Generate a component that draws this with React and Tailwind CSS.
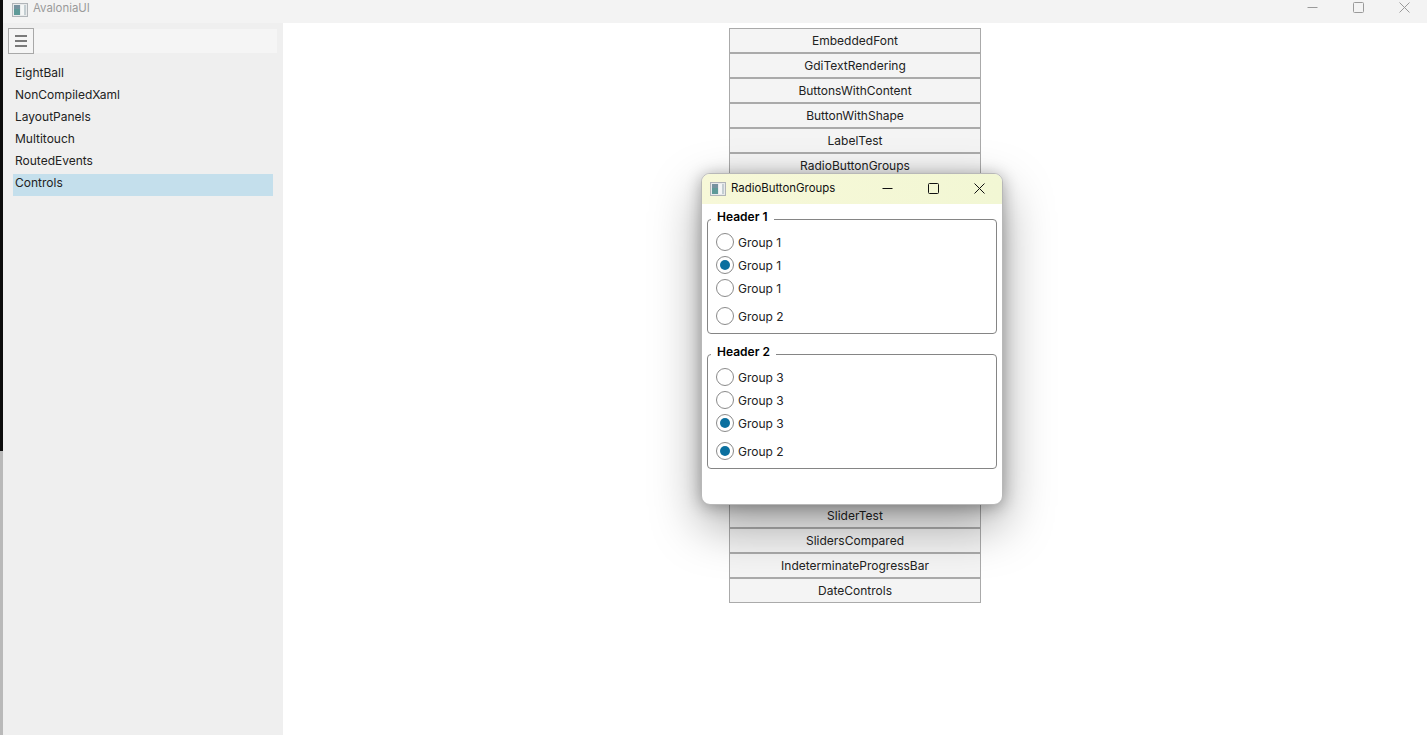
import { useState } from "react";

const topButtons = ["EmbeddedFont", "GdiTextRendering", "ButtonsWithContent", "ButtonWithShape", "LabelTest", "RadioButtonGroups"];
const bottomButtons = ["SliderTest", "SlidersCompared", "IndeterminateProgressBar", "DateControls"];
const sideItems = ["EightBall", "NonCompiledXaml", "LayoutPanels", "Multitouch", "RoutedEvents", "Controls"];

const AppIcon = () => (
  <svg width="16" height="14" viewBox="0 0 16 14" className="shrink-0">
    <rect x="0.5" y="0.5" width="15" height="13" fill="#e8eaeb" stroke="#b0b4b8" />
    <rect x="2" y="2" width="6" height="10" fill="#5e9a98" />
    <rect x="2" y="2" width="6" height="4" fill="#76929f" />
    <rect x="9" y="2" width="5" height="10" fill="#f4f6f6" />
    <rect x="12" y="2" width="2" height="10" fill="#c4ced2" />
  </svg>
);

const WindowControls = ({ color, className }) => (
  <div className={className}>
    <svg width="11" height="11" viewBox="0 0 11 11" className="shrink-0">
      <path d="M0.5 5.5H10.5" stroke={color} strokeWidth="1" />
    </svg>
    <svg width="11" height="11" viewBox="0 0 11 11" className="shrink-0">
      <rect x="0.5" y="0.5" width="10" height="10" rx="1" fill="none" stroke={color} strokeWidth="1" />
    </svg>
    <svg width="11" height="11" viewBox="0 0 11 11" className="shrink-0">
      <path d="M0.5 0.5L10.5 10.5M10.5 0.5L0.5 10.5" stroke={color} strokeWidth="1" />
    </svg>
  </div>
);

const Radio = ({ label, checked, className = "" }) => (
  <div className={`flex items-center h-[23px] ${className}`}>
    <span className="flex items-center justify-center w-[18px] h-[18px] rounded-full border border-[#8a8a8a] bg-white">
      {checked && <span className="w-[10px] h-[10px] rounded-full bg-[#0a6f9f]" />}
    </span>
    <span className="ml-[4px] pt-[2px] text-[12px] text-[#222]">{label}</span>
  </div>
);

const GroupBox = ({ header, children, className = "" }) => (
  <div className={`relative h-[115px] border border-[#858585] rounded-[4px] pt-[10px] pl-[8px] ${className}`}>
    <span className="absolute left-[3px] top-[-12px] bg-white px-[6px] h-[18px] leading-[18px] text-[12px] font-semibold text-black">
      {header}
    </span>
    {children}
  </div>
);

const ListButton = ({ label }) => (
  <div className="flex items-center justify-center w-[252px] h-[25px] pt-[1px] border border-[#aaaaaa] bg-[#f4f4f4] text-[12px] text-[#222]">
    {label}
  </div>
);

export default function App() {
  const [selected] = useState("Controls");

  return (
    <div className="flex w-[1427px] h-[735px] overflow-hidden bg-white font-['Inter',sans-serif]">
      <div className="flex flex-col w-[3px] shrink-0">
        <div className="h-[451px] bg-[#0c0c0c]" />
        <div className="flex-1 bg-[#b9b9b9]" />
      </div>
      <div className="flex flex-col flex-1 min-w-0">
        <div className="flex items-center h-[23px] bg-[#f3f3f3] shrink-0">
          <div className="ml-[9px] pb-[4px]">
            <AppIcon />
          </div>
          <span className="ml-[5px] pb-[5px] text-[11.4px] text-[#9a9a9a]">AvaloniaUI</span>
          <WindowControls
            color="#9a9a9a"
            className="ml-auto mr-[17px] mb-[9px] flex items-center gap-[35px]"
          />
        </div>
        <div className="flex flex-1 min-h-0">
          <aside className="w-[280px] shrink-0 bg-[#efefef] pt-[6px]">
            <div className="flex items-center ml-[5px] w-[269px] h-[24px] bg-[#f5f5f5]">
              <div className="flex items-center justify-center w-[26px] h-[26px] shrink-0 border border-[#a8a8a8]">
                <svg width="12" height="12" viewBox="0 0 12 12">
                  <path d="M0 1H12M0 6H12M0 11H12" stroke="#000" strokeWidth="1.2" />
                </svg>
              </div>
            </div>
            <ul className="mx-[10px] mt-[11px]">
              {sideItems.map((item) => (
                <li
                  key={item}
                  className={`h-[22px] pl-[2px] leading-[18px] text-[12px] text-[#222] ${item === selected ? "bg-[#c4dfec]" : ""}`}
                >
                  {item}
                </li>
              ))}
            </ul>
          </aside>
          <main className="relative flex-1 flex flex-col items-center pt-[5px]">
            {topButtons.map((b) => (
              <ListButton key={b} label={b} />
            ))}
            {/* rows hidden behind the dialog */}
            <div className="h-[325px]" />
            {bottomButtons.map((b) => (
              <ListButton key={b} label={b} />
            ))}

            <div className="absolute left-[418px] top-[150px] w-[302px] h-[332px] rounded-[9px] border border-[#b8b8b8] bg-white shadow-[0_20px_50px_rgba(0,0,0,0.35),0_2px_16px_rgba(0,0,0,0.3)] overflow-hidden">
              <div className="flex items-center h-[30px] pl-[8px] bg-gradient-to-r from-[#f7f8d8] to-[#f2f7d4]">
                <AppIcon />
                <span className="ml-[5px] text-[11.4px] text-[#111]">RadioButtonGroups</span>
                <WindowControls
                  color="#111"
                  className="ml-auto mr-[17px] mb-[2px] flex items-center gap-[35px]"
                />
              </div>
              <div className="px-[5px] pt-[15px]">
                <GroupBox header="Header 1">
                  <Radio label="Group 1" />
                  <Radio label="Group 1" checked />
                  <Radio label="Group 1" />
                  <Radio label="Group 2" className="mt-[5px]" />
                </GroupBox>
                <GroupBox header="Header 2" className="mt-[20px]">
                  <Radio label="Group 3" />
                  <Radio label="Group 3" />
                  <Radio label="Group 3" checked />
                  <Radio label="Group 2" checked className="mt-[5px]" />
                </GroupBox>
              </div>
            </div>
          </main>
        </div>
      </div>
    </div>
  );
}
